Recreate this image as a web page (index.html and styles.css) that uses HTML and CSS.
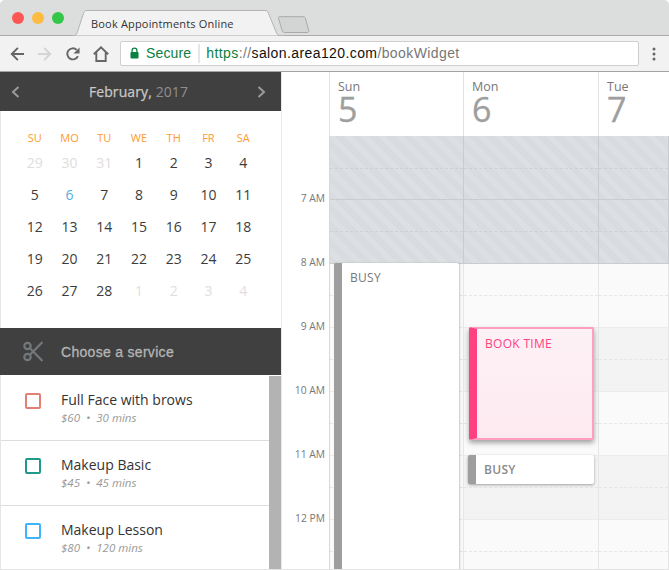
FILE: index.html
```html
<!DOCTYPE html>
<html lang="en">
<head>
<meta charset="utf-8">
<title>Book Appointments Online</title>
<link rel="stylesheet" href="styles.css">
</head>
<body>
<div class="window">
  <header class="chrome">
    <div class="tabstrip">
      <div class="lights"><span class="light red"></span><span class="light amber"></span><span class="light green"></span></div>
      <div class="tab">
        <svg class="tab-shape" width="212" height="26" viewBox="0 0 212 26"><path d="M0 25.500h1.500c2 0 3-1 3.600-2.600L11.500 3.400C12.100 1.600 13 .5 15 .5h178c2 0 2.900 1.100 3.500 2.900l8 19.500c.6 1.600 1.600 2.600 3.600 2.600H212" fill="#f2f2f2" stroke="#b4b4b4"/></svg>
        <span class="tab-title">Book Appointments Online</span>
      </div>
      <svg class="newtab" width="34" height="18" viewBox="0 0 34 18"><path d="M2.500 2.500C2.200 1.300 2.800.7 4 .7h23c1.300 0 2 .5 2.400 1.500l3.300 12.300c.4 1.200-.1 2-1.400 2H8.600c-1.200 0-1.900-.6-2.300-1.700z" fill="#d3d4d4" stroke="#a9a9a9"/></svg>
    </div>
    <div class="toolbar">
      <svg class="tool back" width="14" height="14" viewBox="0 0 16 16"><path d="M16 8H2.500M9 1 2 8l7 7" fill="none" stroke="#666" stroke-width="2.200"/></svg>
      <svg class="tool forward" width="14" height="14" viewBox="0 0 16 16"><path d="M0 8h13.500M7 1l7 7-7 7" fill="none" stroke="#d4d4d4" stroke-width="2.200"/></svg>
      <svg class="tool reload" width="14" height="14" viewBox="0 0 16 16"><path d="M13.600 10.300A6.300 6.300 0 1 1 12.200 3.300" fill="none" stroke="#666" stroke-width="2.200"/><path d="M15.500 .5v7H8.500z" fill="#666"/></svg>
      <svg class="tool home" width="16" height="16" viewBox="0 0 16 16"><path d="M.8 8.200 8 1.300l7.200 6.900M3.300 6.800v8.200h9.400V6.800" fill="none" stroke="#666" stroke-width="1.900"/></svg>
      <div class="omnibox">
        <svg class="lock" width="9" height="12" viewBox="0 0 10 12"><path d="M2.300 5V3.400a2.700 2.700 0 0 1 5.400 0V5" fill="none" stroke="#0b8043" stroke-width="1.400"/><rect x="0.500" y="5" width="9" height="7" rx="1" fill="#0b8043"/></svg>
        <span class="secure">Secure</span>
        <span class="omni-sep"></span>
        <span class="url"><span class="scheme">https</span><span class="slashes">://</span><span class="host">salon.area120.com</span><span class="path">/bookWidget</span></span>
      </div>
      <svg class="menu-dots" width="4" height="14" viewBox="0 0 4 14"><circle cx="2" cy="2" r="1.500" fill="#666"/><circle cx="2" cy="7" r="1.500" fill="#666"/><circle cx="2" cy="12" r="1.500" fill="#666"/></svg>
    </div>
  </header>

  <div class="app">
    <aside class="sidebar">
      <div class="month-bar">
        <svg class="chev" width="9" height="12" viewBox="0 0 9 12"><path d="M7.500 1 2 6l5.500 5" fill="none" stroke="#9a9a9a" stroke-width="2"/></svg>
        <div class="month-title"><span class="month">February,</span> <span class="year">2017</span></div>
        <svg class="chev" width="9" height="12" viewBox="0 0 9 12"><path d="M1.500 1 7 6l-5.500 5" fill="none" stroke="#9a9a9a" stroke-width="2"/></svg>
      </div>
      <div class="calendar">
        <span class="dow">SU</span><span class="dow">MO</span><span class="dow">TU</span><span class="dow">WE</span><span class="dow">TH</span><span class="dow">FR</span><span class="dow">SA</span>
        <span class="d muted">29</span><span class="d muted">30</span><span class="d muted">31</span><span class="d">1</span><span class="d">2</span><span class="d">3</span><span class="d">4</span>
        <span class="d">5</span><span class="d today">6</span><span class="d">7</span><span class="d">8</span><span class="d">9</span><span class="d">10</span><span class="d">11</span>
        <span class="d">12</span><span class="d">13</span><span class="d">14</span><span class="d">15</span><span class="d">16</span><span class="d">17</span><span class="d">18</span>
        <span class="d">19</span><span class="d">20</span><span class="d">21</span><span class="d">22</span><span class="d">23</span><span class="d">24</span><span class="d">25</span>
        <span class="d">26</span><span class="d">27</span><span class="d">28</span><span class="d muted">1</span><span class="d muted">2</span><span class="d muted">3</span><span class="d muted">4</span>
      </div>
      <div class="service-bar">
        <svg class="scissors" width="20" height="21" viewBox="0 0 20 21" fill="none" stroke="#73787a" stroke-width="2.200"><circle cx="4.500" cy="5" r="3.200"/><circle cx="4.500" cy="16" r="3.200"/><path d="M7 7.200 19.500 20M7 13.800 19.500 1"/></svg>
        <span class="service-title">Choose a service</span>
      </div>
      <div class="services">
        <ul class="service-list">
          <li class="service"><span class="check coral"></span><div><div class="name">Full Face with brows</div><div class="meta">$60 &nbsp;•&nbsp; 30 mins</div></div></li>
          <li class="service"><span class="check teal"></span><div><div class="name">Makeup Basic</div><div class="meta">$45 &nbsp;•&nbsp; 45 mins</div></div></li>
          <li class="service"><span class="check sky"></span><div><div class="name">Makeup Lesson</div><div class="meta">$80 &nbsp;•&nbsp; 120 mins</div></div></li>
        </ul>
        <div class="scrollbar"></div>
      </div>
    </aside>

    <main class="schedule">
      <div class="day-heads">
        <div class="head-gutter"></div>
        <div class="day-head sun"><div class="dname">Sun</div><div class="dnum">5</div></div>
        <div class="day-head mon"><div class="dname">Mon</div><div class="dnum">6</div></div>
        <div class="day-head tue"><div class="dname">Tue</div><div class="dnum">7</div></div>
      </div>
      <div class="grid">
        <div class="gutter">
          <div class="slot"><span>7 AM</span></div>
          <div class="slot"><span>8 AM</span></div>
          <div class="slot"><span>9 AM</span></div>
          <div class="slot"><span>10 AM</span></div>
          <div class="slot"><span>11 AM</span></div>
          <div class="slot"><span>12 PM</span></div>
        </div>
        <div class="col sun">
          <div class="hour blocked"><div class="half"></div></div>
          <div class="hour blocked"><div class="half"></div></div>
          <div class="hour open"><div class="half"></div></div>
          <div class="hour open"><div class="half"></div></div>
          <div class="hour open"><div class="half"></div></div>
          <div class="hour open"><div class="half"></div></div>
          <div class="hour open"><div class="half"></div></div>
          <div class="event busy-long"><span>BUSY</span></div>
        </div>
        <div class="col mon">
          <div class="hour blocked"><div class="half"></div></div>
          <div class="hour blocked"><div class="half"></div></div>
          <div class="hour open"><div class="half"></div></div>
          <div class="hour closed"><div class="half"></div></div>
          <div class="hour open"><div class="half"></div></div>
          <div class="hour closed"><div class="half"></div></div>
          <div class="hour open"><div class="half"></div></div>
          <div class="event book"><span>BOOK TIME</span></div>
          <div class="event busy-short"><span>BUSY</span></div>
        </div>
        <div class="col tue">
          <div class="hour blocked"><div class="half"></div></div>
          <div class="hour blocked"><div class="half"></div></div>
          <div class="hour open"><div class="half"></div></div>
          <div class="hour closed"><div class="half"></div></div>
          <div class="hour open"><div class="half"></div></div>
          <div class="hour closed"><div class="half"></div></div>
          <div class="hour open"><div class="half"></div></div>
        </div>
      </div>
    </main>
  </div>
</div>
</body>
</html>
```
FILE: styles.css
```css
* { box-sizing: border-box; }
html, body { margin: 0; padding: 0; background: #fff; }
body { width: 669px; height: 570px; overflow: hidden; font-family: "Open Sans", "Liberation Sans", sans-serif; color: #444; }
.window { width: 669px; height: 570px; display: flex; flex-direction: column; overflow: hidden; border-bottom: 1px solid #e4e4e4; }

/* browser chrome */
.chrome { flex: none; height: 72px; display: flex; flex-direction: column; border-radius: 5px 5px 0 0; overflow: hidden; background: #f2f2f2; border-bottom: 1px solid #a3a3a3; }
.tabstrip { flex: none; height: 36px; background: #dcdedd; border-bottom: 1px solid #ababab; display: flex; align-items: flex-start; }
.lights { display: flex; gap: 8px; padding: 12px 0 0 12px; width: 72px; flex: none; }
.light { width: 12px; height: 12px; border-radius: 50%; }
.light.red { background: #fc5753; }
.light.amber { background: #fdbc40; }
.light.green { background: #33c748; }
.tab { position: relative; flex: none; width: 212px; height: 36px; padding: 16px 0 0 19px; font-size: 11px; line-height: 16px; letter-spacing: .18px; color: #333; }
.tab-shape { position: absolute; left: 0; top: 10px; }
.tab-title { position: relative; }
.newtab { flex: none; margin: 16px 0 0 -8px; }
.toolbar { flex: 1; display: flex; align-items: center; padding: 0 13px 0 10px; }
.tool { flex: none; display: block; }
.tool.back { margin-right: 14px; }
.tool.forward { margin-right: 14px; }
.tool.reload { margin-right: 13px; }
.tool.home { margin-right: 11px; }
.omnibox { flex: 1; height: 25px; margin-top: -1px; background: #fff; border: 1px solid #cfcfcf; border-radius: 2px; display: flex; align-items: center; padding-left: 9px; font-family: "Liberation Sans", sans-serif; font-size: 14px; white-space: nowrap; }
.lock { flex: none; margin-right: 7px; }
.secure { color: #0b8043; letter-spacing: .15px; }
.omni-sep { width: 2px; height: 19px; background: #e6e6e6; margin: 0 6px 0 7px; }
.url { letter-spacing: .4px; }
.scheme { color: #0b8043; }
.slashes, .path { color: #777; }
.host { color: #111; }
.menu-dots { flex: none; margin-left: 13px; }

/* app */
.app { flex: 1; min-height: 0; display: flex; }
.sidebar { flex: none; width: 282px; display: flex; flex-direction: column; border-right: 1px solid #e8e8e8; border-left: 1px solid #e6e6e6; }
.month-bar { flex: none; height: 39px; margin-left: -1px; background: #404040; display: flex; align-items: center; justify-content: space-between; padding: 0 15px 0 11px; }
.chev { flex: none; }
.month-title { font-size: 14px; letter-spacing: .1px; color: #c8c8c8; }
.month { -webkit-text-stroke: .25px #c8c8c8; }
.year { color: #8f8f8f; }
.calendar { flex: none; height: 217px; padding: 19px 20.500px 0 16.500px; display: grid; grid-template-columns: repeat(7, 1fr); grid-template-rows: 17px repeat(5, 32px); align-content: start; text-align: center; }
.dow { font-size: 11px; line-height: 16px; color: #ff9a2e; }
.d { font-size: 14px; line-height: 32px; color: #3c3c3c; }
.d.muted { color: #dedede; }
.d.today { color: #5aade0; }
.service-bar { flex: none; height: 47px; margin-left: -1px; background: #404040; display: flex; align-items: center; padding-left: 23px; }
.scissors { flex: none; margin-right: 18px; }
.service-title { font-family: "Liberation Sans", sans-serif; font-size: 14px; letter-spacing: .3px; color: #b4b4b4; -webkit-text-stroke: .3px #b4b4b4; }
.services { flex: 1; min-height: 0; display: flex; overflow: hidden; }
.service-list { flex: 1; margin: 0; padding: 1px 0 0; list-style: none; }
.service { height: 65px; padding: 14px 0 0 24px; display: flex; border-bottom: 1px solid #ddd; }
.check { flex: none; width: 16px; height: 16px; margin: 3px 20px 0 0; border: 2px solid; border-radius: 2px; }
.check.coral { border-color: #e47f73; }
.check.teal { border-color: #1f9a8a; }
.check.sky { border-color: #3fb4fb; }
.name { font-size: 14px; line-height: 20px; color: #333; }
.meta { font-size: 11.500px; line-height: 16px; font-style: italic; color: #999; white-space: pre; }
.scrollbar { flex: none; width: 12px; margin-top: 1px; background: #b3b3b3; }

/* schedule */
.schedule { flex: 1; min-width: 0; display: flex; flex-direction: column; }
.day-heads { flex: none; height: 64px; display: flex; }
.head-gutter { flex: none; width: 48px; border-right: 1px solid #e2e2e2; }
.day-head { padding: 6px 0 0 8px; border-right: 1px solid #e2e2e2; }
.day-head.sun { flex: none; width: 134px; }
.day-head.mon { flex: none; width: 135px; }
.day-head.tue { flex: 1; border-right: 0; }
.dname { font-size: 12.500px; line-height: 18px; color: #777; }
.dnum { font-size: 34px; line-height: 30px; color: #9e9e9e; margin-top: -2px; -webkit-text-stroke: .3px #9e9e9e; }
.grid { flex: 1; min-height: 0; display: flex; overflow: hidden; }
.gutter { flex: none; width: 48px; border-right: 1px solid #d8d8d8; }
.slot { height: 64px; display: flex; align-items: flex-end; justify-content: flex-end; padding-right: 4px; }
.slot span { font-size: 10.300px; line-height: 14px; margin-bottom: -5px; color: #777; }
.col { position: relative; flex: none; }
.col.sun { width: 134px; }
.col.mon { width: 135px; }
.col.tue { flex: 1; }
.hour { height: 64px; border-right: 1px solid #e6e6e6; border-bottom: 1px solid #ececec; }
.half { height: 32px; border-bottom: 1px dashed #e6e6e6; }
.hour:first-child .half { height: 33px; }
.hour.open { background: #fafafa; }
.hour.closed { background: #f3f3f3; }
.hour.blocked { background: repeating-linear-gradient(45deg, #d8dbdf 0 6px, #dde0e3 6px 12px); border-right-color: #c8cbcf; border-bottom-color: #c9ccd0; }
.hour.blocked .half { border-bottom-color: #ced1d4; }

.event { position: absolute; font-size: 12px; line-height: 16px; letter-spacing: .3px; background: #fff; }
.busy-long { left: 4px; width: 125px; top: 127px; height: 320px; padding: 7px 0 0 8px; border-left: 8px solid #9e9e9e; border-radius: 2px 2px 0 0; color: #777; box-shadow: 1px 0 2px rgba(0,0,0,.2); }
.book { left: 5px; width: 125px; top: 191px; height: 113px; padding: 7px 0 0 8px; background: linear-gradient(#fdf1f5, #fdeaf1); border: 2px solid #ff9fc0; border-left: 8px solid #ff4081; border-radius: 2px; color: #ff4081; box-shadow: 0 3px 5px rgba(0,0,0,.35); }
.busy-short { left: 4px; width: 126px; top: 319px; height: 29px; padding: 7px 0 0 8px; border-left: 8px solid #9e9e9e; border-radius: 2px; color: #8a8a8a; font-weight: 600; box-shadow: 0 1px 3px rgba(0,0,0,.35); }
```
